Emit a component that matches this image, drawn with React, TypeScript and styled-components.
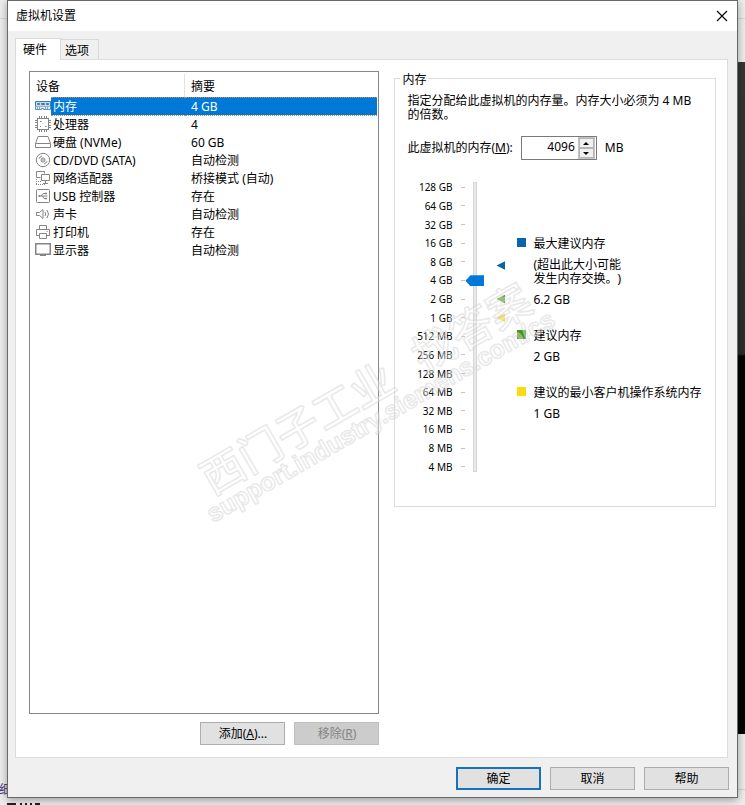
import React, { useState } from 'react';
import styled, { createGlobalStyle } from 'styled-components';

const GlobalStyle = createGlobalStyle`
  * { box-sizing: border-box; }
  body {
    margin: 0;
    font: 12px/14px "Noto Sans", "Noto Sans CJK SC", sans-serif;
    text-spacing-trim: space-all;
    color: #000;
    background: #f0f0f0;
  }
  button, input { font: inherit; color: inherit; }
`;

const Desktop = styled.div`
  position: relative;
  min-height: 100vh;
  padding: 0 7px 7px;
  overflow: hidden;
  background: #ededed;
`;

const BackWindow = styled.div`
  position: absolute;
  inset: 18px 0 15px;
  border-top: 1px solid #d8d8d8;
  border-bottom: 1px solid #d4d4d4;
`;

const DarkWindow = styled.div`
  position: absolute;
  top: 62px;
  right: 0;
  bottom: 71px;
  width: 20px;
  background: linear-gradient(#363636, #2c2c2c 292px, #030303 294px);
`;

const BackLink = styled.span`
  position: absolute;
  left: -1px;
  bottom: 8px;
  color: #483a86;
`;

const BackMarks = styled.svg`
  position: absolute;
  left: 7px;
  bottom: 0;
`;

const Dialog = styled.main`
  position: relative;
  display: flex;
  flex-direction: column;
  min-height: calc(100vh - 7px);
  border: 1px solid #686868;
  background: #f0f0f0;
  box-shadow: 0 2px 8px rgba(0, 0, 0, 0.35);
`;

const TitleBar = styled.header`
  display: flex;
  align-items: center;
  justify-content: space-between;
  height: 30px;
  padding: 0 9px 0 8px;
  background: #fff;
`;

const Title = styled.h1`
  margin: 0;
  font-size: 12px;
  font-weight: 400;
`;

const CloseButton = styled.button`
  display: flex;
  padding: 0;
  border: 0;
  background: none;
`;

const Body = styled.div`
  display: flex;
  flex: 1;
  flex-direction: column;
  padding: 7px 9px 7px 7px;
`;

const Tabs = styled.div`
  display: flex;
  align-items: flex-end;
`;

const Tab = styled.button<{ $active: boolean }>`
  position: relative;
  height: ${p => (p.$active ? 22 : 20)}px;
  width: ${p => (p.$active ? 46 : 38)}px;
  padding: ${p => (p.$active ? '0 6px 0 0' : '2px 5px 0 0')};
  margin-bottom: ${p => (p.$active ? -1 : 0)}px;
  z-index: ${p => (p.$active ? 1 : 0)};
  border: 1px solid #d9d9d9;
  border-bottom: 0;
  border-left-width: ${p => (p.$active ? 1 : 0)}px;
  background: ${p => (p.$active ? '#fff' : '#f0f0f0')};
`;

const TabPanel = styled.section`
  position: relative;
  display: grid;
  flex: 1;
  grid-template-columns: minmax(0, 351fr) minmax(0, 322fr);
  gap: 15px;
  padding: 11px 11px 12px 13px;
  border: 1px solid #dcdcdc;
  background: #fff;
`;

const DeviceColumn = styled.div`
  display: flex;
  flex-direction: column;
  gap: 8px;
`;

const DeviceList = styled.div`
  flex: 1;
  padding-right: 1px;
  border: 1px solid #828790;
  background: #fff;
`;

const DeviceTable = styled.table`
  width: 100%;
  table-layout: fixed;
  border-collapse: collapse;
`;

const IconCol = styled.col`
  width: 21px;
`;

const NameCol = styled.col`
  width: 134px;
`;

const HeadCell = styled.th<{ $divided?: boolean }>`
  height: 25px;
  padding: 5px 0 0 6px;
  text-align: left;
  font-weight: 400;
  background: ${p => (p.$divided ? 'linear-gradient(#e2e2e2, #e2e2e2) right 2px / 1px 100% no-repeat' : 'none')};
`;

const DeviceRow = styled.tr<{ $selected: boolean }>`
  height: 18px;
  color: ${p => (p.$selected ? '#fff' : '#000')};
`;

const IconCell = styled.td`
  padding: 0 0 0 5px;
  line-height: 0;
`;

const DeviceCell = styled.td<{ $selected: boolean; $indent: number }>`
  padding: 2px 0 0 ${p => p.$indent}px;
  white-space: nowrap;
  background: ${p => (p.$selected ? '#0078d7' : 'none')};
  border-top: ${p => (p.$selected ? '1px dotted #c48a4a' : '0')};
  border-bottom: ${p => (p.$selected ? '1px dotted #c48a4a' : '0')};
`;

const Actions = styled.div`
  display: flex;
  justify-content: flex-end;
  gap: 9px;
`;

const PushButton = styled.button<{ $primary?: boolean }>`
  width: 85px;
  height: 23px;
  padding: 1px 0 0;
  border: ${p => (p.$primary ? '2px solid #1673b9' : '1px solid #adadad')};
  background: #e1e1e1;
  &:disabled {
    border-color: #bfbfbf;
    background: #ccc;
    color: #838383;
  }
`;

const Group = styled.fieldset`
  min-width: 0;
  align-self: start;
  margin: -1px 0 0;
  padding: 7px 12px 30px;
  border: 1px solid #dcdcdc;
`;

const GroupTitle = styled.legend`
  margin-left: -7px;
  padding: 3px 2px 0;
`;

const Hint = styled.p`
  margin: 0;
`;

const MemoryField = styled.div`
  display: flex;
  align-items: center;
  gap: 8px;
  margin-top: 14px;
`;

const SpinBox = styled.div`
  display: flex;
  width: 76px;
  height: 24px;
  padding-right: 1px;
  border: 1px solid #7a7a7a;
  background: #fff;
`;

const MemoryInput = styled.input`
  flex: 1;
  min-width: 0;
  padding: 0 3px 2px;
  border: 0;
  outline: 0;
  text-align: right;
  background: none;
`;

const Spinner = styled.div`
  display: flex;
  flex-direction: column;
  width: 17px;
  padding: 1px;
  background: #c4c4c4;
`;

const SpinButton = styled.button`
  display: flex;
  flex: 1;
  align-items: center;
  justify-content: center;
  padding: 0;
  border: 1px solid #b5b5b5;
  background: #f0f0f0;
`;

const ScaleArea = styled.div`
  display: flex;
  margin-top: 18px;
`;

const ScaleLabels = styled.ol`
  display: flex;
  flex-direction: column;
  width: 58px;
  height: 298px;
  margin: 0;
  padding: 0;
  list-style: none;
  font-size: 10px;
`;

const ScaleLabel = styled.li`
  display: flex;
  flex: 1;
  align-items: center;
  justify-content: flex-end;
  gap: 9px;
  white-space: nowrap;
  &::after {
    content: "";
    width: 4px;
    height: 1px;
    background: #c4c4c4;
  }
`;

const MemorySlider = styled.input`
  appearance: none;
  writing-mode: vertical-lr;
  direction: rtl;
  width: 20px;
  height: 290px;
  margin: 4px 0;
  background: none;
  &::-webkit-slider-runnable-track {
    width: 4px;
    height: 290px;
    border: 1px solid #d6d6d6;
    background: #e7eaea;
  }
  &::-webkit-slider-thumb {
    appearance: none;
    width: 19px;
    height: 11px;
    margin-left: -9px;
    background: #0078d7;
    clip-path: polygon(0 50%, 5px 0, 100% 0, 100% 100%, 5px 100%);
  }
`;

const Markers = styled.div`
  position: relative;
  width: 9px;
  height: 279px;
  margin: 9px 12px 0 11px;
`;

const Marker = styled.i<{ $color: string }>`
  position: absolute;
  width: 9px;
  height: 9px;
  margin-top: -4px;
  background: ${p => p.$color};
  clip-path: polygon(0 50%, 100% 0, 100% 100%);
`;

const Legend = styled.dl`
  display: flex;
  flex: 1;
  flex-direction: column;
  gap: 22px;
  margin: 59px 0 0;
  white-space: nowrap;
`;

const LegendItem = styled.div`
  display: flex;
  flex-direction: column;
  gap: 7px;
`;

const LegendTerm = styled.dt<{ $color: string }>`
  display: flex;
  gap: 7px;
  &::before {
    content: "";
    width: 9px;
    height: 9px;
    margin-top: 1px;
    background: ${p => p.$color};
  }
`;

const LegendValue = styled.dd`
  margin: 0 0 0 16px;
`;

const Footer = styled.footer`
  display: flex;
  justify-content: flex-end;
  gap: 9px;
  margin: 9px -1px 0 0;
`;

const Watermark = styled.svg`
  position: absolute;
  left: 180px;
  top: 211px;
  width: 390px;
  height: 270px;
  overflow: visible;
  pointer-events: none;
  fill: rgba(255, 255, 255, 0.35);
  stroke: rgba(205, 205, 205, 0.45);
  stroke-width: 1.5;
  stroke-linejoin: round;
  font-family: "Noto Sans CJK SC", sans-serif;
`;

const glyphs: Record<string, React.ReactNode> = {
  memory: (
    <>
      <path d="M0.5 3.5h15v5h-15z" fill="#c3dcee" stroke="#3f79a6" />
      <path d="M2.5 5.5h2v1h-2zM6.5 5.5h3v1h-3zM11.5 5.5h2v1h-2z" stroke="#3f79a6" />
      <path d="M0.5 8.5v3h6v-1h2v1h7v-3" fill="#e3edf4" stroke="#6890ab" />
      <path d="M2.5 9v2M4.5 9v2M10.5 9v2M12.5 9v2" stroke="#8aa9bf" />
    </>
  ),
  cpu: (
    <>
      <rect x="2.5" y="2.5" width="11" height="11" />
      <path d="M4.5 0v2M6.5 0v2M9.5 0v2M11.5 0v2M4.5 14v2M6.5 14v2M9.5 14v2M11.5 14v2M0 4.5h2M0 6.5h2M0 9.5h2M0 11.5h2M14 4.5h2M14 6.5h2M14 9.5h2M14 11.5h2" />
      <path d="M5 5.5h1.500M10 10.5h1.500M5.500 10v1" />
    </>
  ),
  disk: (
    <>
      <path d="M3 2.5h10l2.5 7v4H.5v-4z" />
      <path d="M0.5 9.5h15" />
    </>
  ),
  disc: (
    <>
      <circle cx="8" cy="8" r="6.7" />
      <circle cx="8" cy="8" r="2" />
      <circle cx="8" cy="8" r="0.4" />
      <path d="M4 6.8Q4.8 4.6 7 4M12 9.2Q11.2 11.4 9 12" />
    </>
  ),
  network: (
    <>
      <path d="M5.5 7.5h-4v-6h8v2M6.5 4.500h8v6h-8zM10.5 11v2M8 13.5h5" />
      <path d="M1.5 9v6M1 14.5h9M1 11.5h5" strokeDasharray="1 1" />
    </>
  ),
  usb: (
    <>
      <rect x="1.5" y="1.5" width="13" height="13" rx="1" />
      <path d="M3.5 8h9M6 8l2-2.5h2M7.5 8l1.5 2.5h2" />
      <path d="M4 7.5h1v1H4zM10.5 5h1v1h-1zM10.5 10h1v1h-1z" />
    </>
  ),
  sound: <path d="M1.5 6.5h3l3.5-3v9l-3.5-3h-3zM10 6q1.5 2 0 4M12 4q3 4 0 8" />,
  printer: (
    <>
      <path d="M4.5 5.5v-4h7v4M4.5 11.5h-3v-6h13v6h-3" />
      <path d="M4.5 9.5h7v5h-7zM11.5 7.5h1" />
    </>
  ),
  display: (
    <>
      <path d="M0.75 1.75h14.5v10.5H.75z" strokeWidth="1.5" />
      <path d="M5 13.5h6" />
    </>
  ),
};

const DeviceIcon = ({ kind }: { kind: string }) => (
  <svg width="16" height="16" viewBox="0 0 16 16" fill="none" stroke="#858585" aria-hidden="true">
    {glyphs[kind]}
  </svg>
);

const devices = [
  ['memory', '内存', '4 GB'],
  ['cpu', '处理器', '4'],
  ['disk', '硬盘 (NVMe)', '60 GB'],
  ['disc', 'CD/DVD (SATA)', '自动检测'],
  ['network', '网络适配器', '桥接模式 (自动)'],
  ['usb', 'USB 控制器', '存在'],
  ['sound', '声卡', '自动检测'],
  ['printer', '打印机', '存在'],
  ['display', '显示器', '自动检测'],
];

const sizes = [
  '128 GB', '64 GB', '32 GB', '16 GB', '8 GB', '4 GB', '2 GB', '1 GB',
  '512 MB', '256 MB', '128 MB', '64 MB', '32 MB', '16 MB', '8 MB', '4 MB',
];
const topStep = sizes.length - 1;

const markers = [
  { step: 10.8, color: '#0a64ad' },
  { step: 9, color: '#4f9c2c' },
  { step: 8, color: '#f6dc3c' },
];

export default function App() {
  const [selected, setSelected] = useState(0);
  const [step, setStep] = useState(10);
  const memory = 4 * 2 ** step;
  const move = (delta: number) => setStep(Math.min(topStep, Math.max(0, step + delta)));

  return (
    <Desktop>
      <GlobalStyle />
      <BackWindow />
      <DarkWindow />
      <BackLink>细</BackLink>
      <BackMarks width="36" height="2" aria-hidden="true">
        <path d="M0 0h9v2H0zM13 0h2v2h-2zM18 0h2v2h-2zM23 0h2v2h-2zM28 0h5v2h-5z" fill="#222" />
      </BackMarks>
      <Dialog>
        <TitleBar>
          <Title>虚拟机设置</Title>
          <CloseButton aria-label="关闭">
            <svg width="12" height="12" viewBox="0 0 12 12" stroke="#000" strokeWidth="1.1">
              <path d="M1 1l10 10M11 1L1 11" />
            </svg>
          </CloseButton>
        </TitleBar>
        <Body>
          <Tabs role="tablist">
            <Tab role="tab" aria-selected="true" $active>硬件</Tab>
            <Tab role="tab" aria-selected="false" $active={false}>选项</Tab>
          </Tabs>
          <TabPanel>
            <DeviceColumn>
              <DeviceList>
                <DeviceTable>
                  <colgroup>
                    <IconCol />
                    <NameCol />
                    <col />
                  </colgroup>
                  <thead>
                    <tr>
                      <HeadCell colSpan={2} $divided>设备</HeadCell>
                      <HeadCell>摘要</HeadCell>
                    </tr>
                  </thead>
                  <tbody>
                    {devices.map(([kind, name, summary], i) => (
                      <DeviceRow key={kind} $selected={i === selected} onClick={() => setSelected(i)}>
                        <IconCell><DeviceIcon kind={kind} /></IconCell>
                        <DeviceCell $selected={i === selected} $indent={2}>{name}</DeviceCell>
                        <DeviceCell $selected={i === selected} $indent={6}>{summary}</DeviceCell>
                      </DeviceRow>
                    ))}
                  </tbody>
                </DeviceTable>
              </DeviceList>
              <Actions>
                <PushButton>添加(<u>A</u>)...</PushButton>
                <PushButton disabled>移除(<u>R</u>)</PushButton>
              </Actions>
            </DeviceColumn>
            <Group>
              <GroupTitle>内存</GroupTitle>
              <Hint>指定分配给此虚拟机的内存量。内存大小必须为 4 MB 的倍数。</Hint>
              <MemoryField>
                <label htmlFor="memory">此虚拟机的内存(<u>M</u>):</label>
                <SpinBox>
                  <MemoryInput id="memory" value={memory} readOnly />
                  <Spinner>
                    <SpinButton aria-label="增加" onClick={() => move(1)}>
                      <svg width="6" height="3"><path d="M0 3L3 0 6 3z" /></svg>
                    </SpinButton>
                    <SpinButton aria-label="减少" onClick={() => move(-1)}>
                      <svg width="6" height="3"><path d="M0 0h6L3 3z" /></svg>
                    </SpinButton>
                  </Spinner>
                </SpinBox>
                <span>MB</span>
              </MemoryField>
              <ScaleArea>
                <ScaleLabels>
                  {sizes.map(size => <ScaleLabel key={size}>{size}</ScaleLabel>)}
                </ScaleLabels>
                <MemorySlider
                  type="range"
                  aria-label="虚拟机内存"
                  min={0}
                  max={topStep}
                  value={step}
                  onChange={e => setStep(Number(e.target.value))}
                />
                <Markers>
                  {markers.map(m => (
                    <Marker key={m.color} $color={m.color} style={{ top: `${100 - (m.step / topStep) * 100}%` }} />
                  ))}
                </Markers>
                <Legend>
                  <LegendItem>
                    <LegendTerm $color="#0a64ad">最大建议内存</LegendTerm>
                    <LegendValue>(超出此大小可能<br />发生内存交换。)</LegendValue>
                    <LegendValue>6.2 GB</LegendValue>
                  </LegendItem>
                  <LegendItem>
                    <LegendTerm $color="#43931c">建议内存</LegendTerm>
                    <LegendValue>2 GB</LegendValue>
                  </LegendItem>
                  <LegendItem>
                    <LegendTerm $color="#ffda0c">建议的最小客户机操作系统内存</LegendTerm>
                    <LegendValue>1 GB</LegendValue>
                  </LegendItem>
                </Legend>
              </ScaleArea>
            </Group>
            <Watermark viewBox="0 0 390 270" aria-hidden="true">
              <g transform="translate(17 252) rotate(-30)">
                <text x="13" y="-24" fontSize="43" fontWeight="500">西门子工业</text>
                <text x="257" y="-24" fontSize="43" fontWeight="500">找答案</text>
                <text x="0" y="0" fontSize="25" fontWeight="700" fontFamily="Liberation Sans">support.industry.siemens.com/cs</text>
              </g>
            </Watermark>
          </TabPanel>
          <Footer>
            <PushButton $primary>确定</PushButton>
            <PushButton>取消</PushButton>
            <PushButton>帮助</PushButton>
          </Footer>
        </Body>
      </Dialog>
    </Desktop>
  );
}
